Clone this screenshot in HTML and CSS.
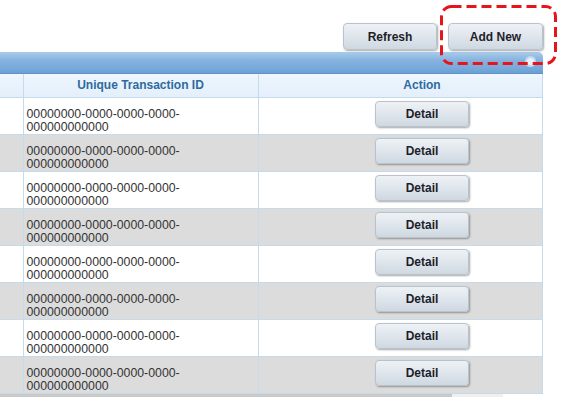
FILE: index.html
```html
<!DOCTYPE html>
<html>
<head>
<meta charset="utf-8">
<link rel="stylesheet" href="styles.css">
</head>
<body>
<div class="toolbar">
  <button class="btn">Refresh</button>
  <div class="highlight">
    <button class="btn">Add New</button>
    <svg class="dash" width="117" height="60" viewBox="0 0 117 60"><rect x="1.5" y="1.5" width="114" height="57" rx="10" ry="10" fill="none" stroke="#e8141b" stroke-width="3" stroke-dasharray="10 5"/></svg>
  </div>
</div>
<div class="grid">
  <div class="caption"><span class="collapse"></span></div>
  <div class="viewport">
    <table>
      <colgroup><col class="c1"><col class="c2"><col class="c3"></colgroup>
      <thead>
        <tr><th></th><th>Unique Transaction ID</th><th>Action</th></tr>
      </thead>
      <tbody>
        <tr><td></td><td>00000000-0000-0000-0000-<br>000000000000</td><td class="act"><button class="btn small">Detail</button></td></tr>
        <tr class="alt"><td></td><td>00000000-0000-0000-0000-<br>000000000000</td><td class="act"><button class="btn small">Detail</button></td></tr>
        <tr><td></td><td>00000000-0000-0000-0000-<br>000000000000</td><td class="act"><button class="btn small">Detail</button></td></tr>
        <tr class="alt"><td></td><td>00000000-0000-0000-0000-<br>000000000000</td><td class="act"><button class="btn small">Detail</button></td></tr>
        <tr><td></td><td>00000000-0000-0000-0000-<br>000000000000</td><td class="act"><button class="btn small">Detail</button></td></tr>
        <tr class="alt"><td></td><td>00000000-0000-0000-0000-<br>000000000000</td><td class="act"><button class="btn small">Detail</button></td></tr>
        <tr><td></td><td>00000000-0000-0000-0000-<br>000000000000</td><td class="act"><button class="btn small">Detail</button></td></tr>
        <tr class="alt"><td></td><td>00000000-0000-0000-0000-<br>000000000000</td><td class="act"><button class="btn small">Detail</button></td></tr>
      </tbody>
    </table>
  </div>
  <div class="hscroll"><div class="track"><div class="thumb"></div></div></div>
</div>
</body>
</html>
```

FILE: styles.css
```css
* { box-sizing: border-box; }
html, body { margin: 0; padding: 0; background: #fff; }
body {
  font-family: "Liberation Sans", Arial, sans-serif;
  font-size: 12px;
  color: #333;
  width: 565px;
  height: 397px;
  overflow: hidden;
}
.toolbar {
  display: flex;
  justify-content: flex-end;
  align-items: flex-start;
  gap: 2px;
  padding: 5px 8px 0 0;
  height: 52px;
}
.highlight {
  width: 117px;
  height: 60px;
  padding: 18px 0 0 8px;
  position: relative;
  z-index: 2;
}
.dash {
  position: absolute;
  left: 0;
  top: 0;
  display: block;
}
.btn {
  font-family: "Liberation Sans", Arial, sans-serif;
  font-weight: bold;
  font-size: 12px;
  color: #1e1e2a;
  width: 95px;
  height: 27px;
  border: 1px solid #b9c3cd;
  border-radius: 4px;
  background: linear-gradient(#eef2f6, #dde4eb 55%, #cfd8e1);
  box-shadow: 1px 1px 2px rgba(0,0,0,0.35);
  padding: 0;
}
.toolbar > .btn { margin-top: 18px; margin-right: 1px; width: 94px; }
.btn.small { height: 26px; width: 94px; }
.grid { width: 543px; position: relative; }
.caption {
  height: 22px;
  background: linear-gradient(#a9cbea, #85b3df 40%, #76a8da 80%, #6a9fd4);
  border-bottom: 1px solid #5c93c9;
  border-top-right-radius: 5px;
  position: relative;
}
.collapse {
  position: absolute;
  right: 7px;
  top: 4px;
  width: 11px;
  height: 11px;
  border-radius: 50%;
  background: #e9f0f8;
  border: 2px solid #c6d8ea;
}
.viewport {
  overflow: hidden;
  border-right: 1px solid #c5dbec;
}
table {
  border-collapse: collapse;
  table-layout: fixed;
  width: 586px;
}
col.c1 { width: 23px; }
col.c2 { width: 235px; }
col.c3 { width: 328px; }
th {
  height: 23px;
  background: linear-gradient(#eef6fe, #e3effb);
  color: #2e6aa0;
  font-weight: bold;
  font-size: 12px;
  border-right: 1px solid #c5dbec;
  border-bottom: 1px solid #c5dbec;
  padding: 0;
}
td {
  height: 37px;
  border-right: 1px solid #c5dbec;
  border-bottom: 1px solid #c5dbec;
  padding: 0 3px 0 3px;
  vertical-align: bottom;
  line-height: 13px;
  font-size: 12.3px;
  white-space: nowrap;
}
tr.alt td { background: #dcdcdc; }
td.act { text-align: center; vertical-align: middle; padding: 0 0 3px 0; }
.hscroll { height: 5px; }
.track { width: 503px; height: 5px; background: #f0f0f0; }
.thumb { width: 452px; height: 5px; background: #c9c9c9; }
```
